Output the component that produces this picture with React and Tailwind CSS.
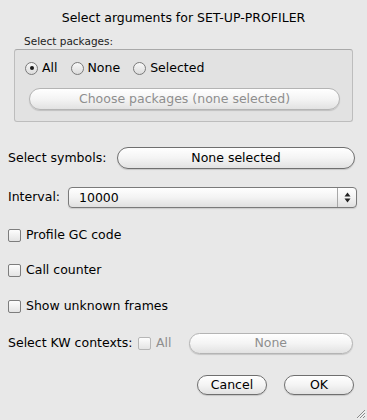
import React from 'react';

const font = { fontFamily: '"DejaVu Sans", "Liberation Sans", sans-serif' };

const AquaButton = ({ children, disabled, className = '' }) => (
  <div
    className={`flex items-center justify-center rounded-full border bg-gradient-to-b from-white via-[#f4f4f4] to-[#e2e2e2] shadow-[0_1px_1px_rgba(0,0,0,0.15)] ${
      disabled ? 'border-[#b4b4b4] text-[#8e8e8e]' : 'border-[#6f6f6f] text-black'
    } ${className}`}
  >
    {children}
  </div>
);

const Radio = ({ checked, label }) => (
  <div className="flex items-center">
    <div className="w-[13px] h-[13px] rounded-full border border-[#7a7a7a] bg-gradient-to-b from-[#f8f8f8] to-[#dcdcdc] flex items-center justify-center">
      {checked && <div className="w-[4px] h-[4px] rounded-full bg-[#1a1a1a]" />}
    </div>
    <span className="ml-[4px]">{label}</span>
  </div>
);

const Checkbox = ({ label, disabled }) => (
  <div className="flex items-center">
    <div
      className={`w-[13px] h-[13px] rounded-[2px] border bg-gradient-to-b from-[#fdfdfd] to-[#e4e4e4] ${
        disabled ? 'border-[#b6b6b6]' : 'border-[#7d7d7d]'
      }`}
    />
    <span className={`ml-[5px] whitespace-nowrap ${disabled ? 'text-[#8e8e8e]' : ''}`}>{label}</span>
  </div>
);

export default function App() {
  return (
    <div style={font} className="relative w-[367px] h-[420px] bg-[#e8e8e8] text-[12.5px] text-black flex flex-col overflow-hidden">
      {/* title */}
      <div className="h-[34px] pt-[10px] leading-[16px] text-center">Select arguments for SET-UP-PROFILER</div>
      <div className="h-[15px] leading-[15px] pl-[24px] text-[10.5px] text-[#222]">Select packages:</div>

      {/* package group */}
      <div className="mx-[14px] h-[73px] rounded-[3px] border border-[#bdbdbd] border-t-[#a9a9a9] bg-[#e2e2e2] pl-[10px] pr-[12px]">
        <div className="mt-[10px] h-[16px] flex items-center gap-[13px] leading-[16px]">
          <Radio checked label="All" />
          <Radio label="None" />
          <Radio label="Selected" />
        </div>
        <AquaButton disabled className="mt-[12px] ml-[4px] h-[22px]">
          Choose packages (none selected)
        </AquaButton>
      </div>

      {/* symbols */}
      <div className="mt-[25px] h-[22px] flex items-center pl-[8px] pr-[12px]">
        <span className="w-[109px] whitespace-nowrap">Select symbols:</span>
        <AquaButton className="flex-1 h-[22px]">None selected</AquaButton>
      </div>

      {/* interval */}
      <div className="mt-[18px] h-[21px] flex items-center pl-[8px] pr-[10px]">
        <span className="w-[60px]">Interval:</span>
        <div className="flex-1 h-[21px] flex rounded-[4px] border border-[#7a7a7a] bg-gradient-to-b from-white via-[#f3f3f3] to-[#e0e0e0] shadow-[0_1px_1px_rgba(0,0,0,0.12)]">
          <span className="flex-1 pl-[10px] leading-[19px]">10000</span>
          <div className="w-[19px] border-l border-[#a8a8a8] flex items-center justify-center">
            <svg width="7" height="11" viewBox="0 0 7 11">
              <path d="M3.5 0.5 L6.5 4.5 L0.5 4.5 Z" fill="#222" />
              <path d="M3.5 10.5 L6.5 6.5 L0.5 6.5 Z" fill="#222" />
            </svg>
          </div>
        </div>
      </div>

      {/* options */}
      <div className="mt-[19px] h-[16px] flex items-center pl-[8px]">
        <Checkbox label="Profile GC code" />
      </div>
      <div className="mt-[19px] h-[16px] flex items-center pl-[8px]">
        <Checkbox label="Call counter" />
      </div>
      <div className="mt-[20px] h-[16px] flex items-center pl-[8px]">
        <Checkbox label="Show unknown frames" />
      </div>

      {/* KW contexts */}
      <div className="mt-[19px] h-[21px] flex items-center pl-[8px] pr-[14px]">
        <span className="w-[130px] whitespace-nowrap">Select KW contexts:</span>
        <Checkbox disabled label="All" />
        <AquaButton disabled className="ml-[17px] flex-1 h-[21px]">None</AquaButton>
      </div>

      {/* actions */}
      <div className="mt-[21px] h-[20px] flex justify-end gap-[17px] pr-[13px]">
        <AquaButton className="w-[70px] h-[20px]">Cancel</AquaButton>
        <AquaButton className="w-[70px] h-[20px]">OK</AquaButton>
      </div>

      {/* resize grip */}
      <svg className="absolute right-[1px] bottom-[1px]" width="12" height="12" viewBox="0 0 12 12">
        <path d="M11 3 L3 11 M11 6 L6 11 M11 9 L9 11" stroke="#8a8a8a" strokeWidth="1" />
        <path d="M11.8 3.8 L3.8 11.8 M11.8 6.8 L6.8 11.8" stroke="#fafafa" strokeWidth="0.8" />
      </svg>
    </div>
  );
}
